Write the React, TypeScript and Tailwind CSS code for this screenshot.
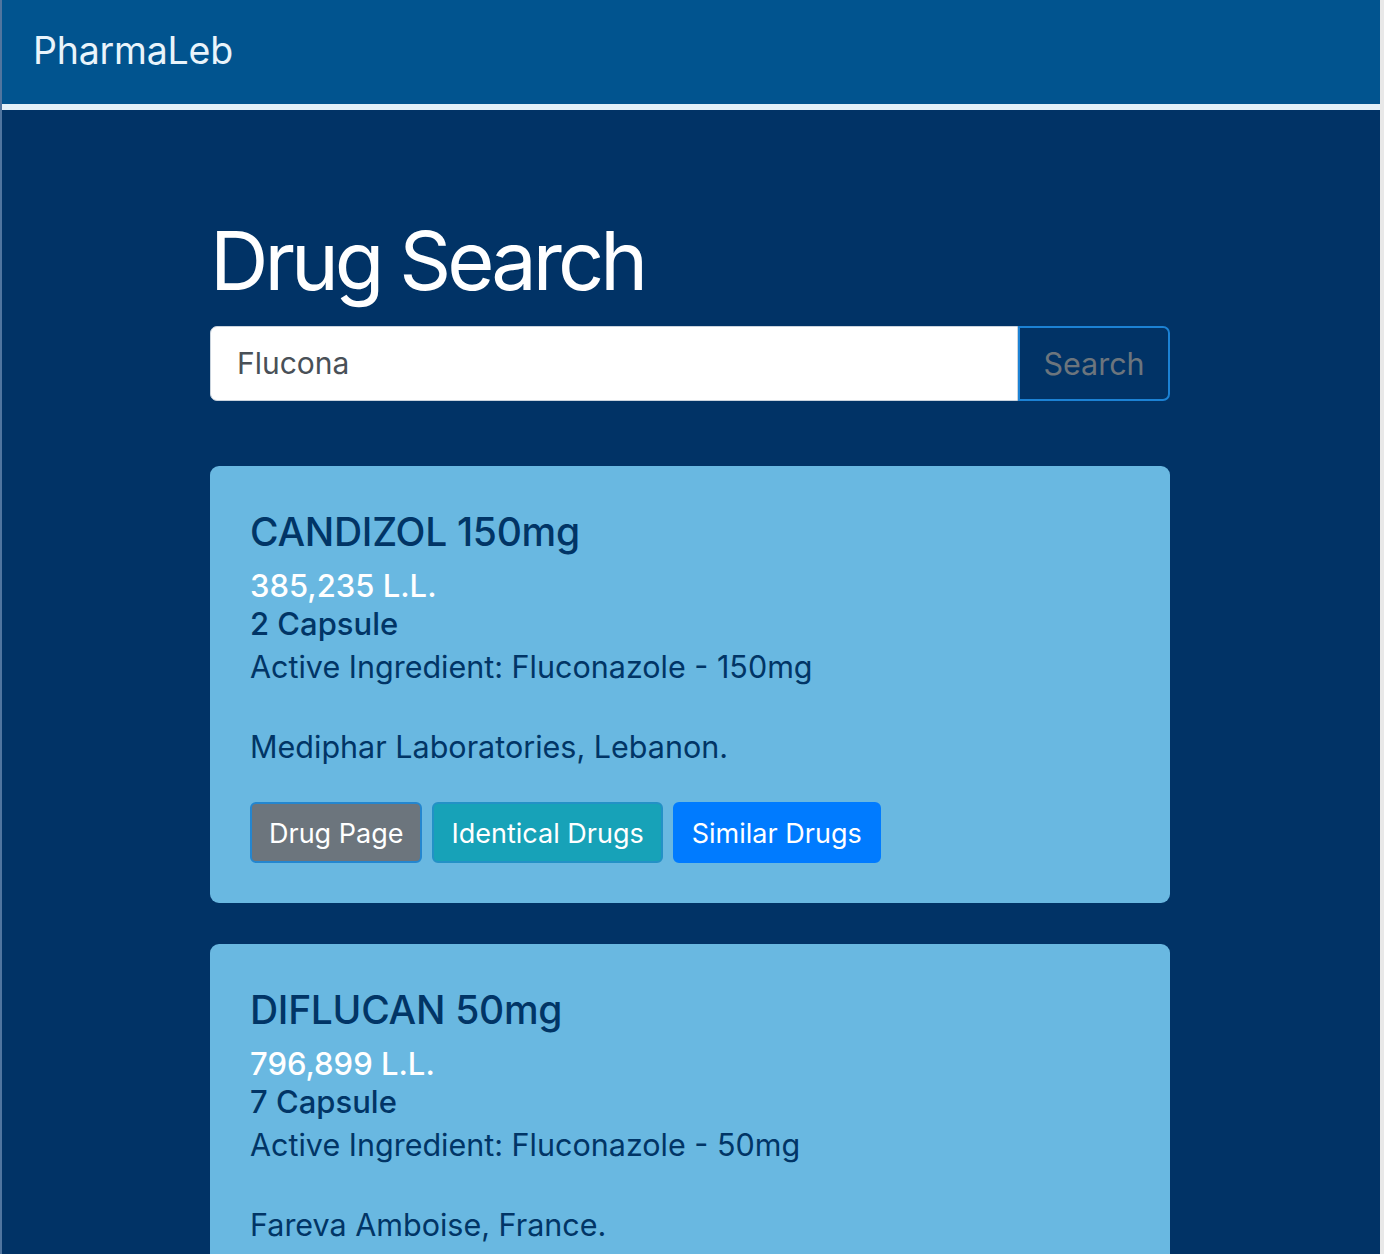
const drugs = [
  {
    name: "CANDIZOL 150mg",
    price: "385,235 L.L.",
    pack: "2 Capsule",
    ingredient: "Active Ingredient: Fluconazole - 150mg",
    maker: "Mediphar Laboratories, Lebanon.",
  },
  {
    name: "DIFLUCAN 50mg",
    price: "796,899 L.L.",
    pack: "7 Capsule",
    ingredient: "Active Ingredient: Fluconazole - 50mg",
    maker: "Fareva Amboise, France.",
  },
];

type Drug = (typeof drugs)[number];

function DrugCard({ drug }: { drug: Drug }) {
  return (
    <div className="bg-[#69b8e1] rounded-[9px] px-[40px] pt-[42px] pb-[40px] text-[#013566]">
      <h4 className="text-[39px] leading-[47px] font-medium tracking-[-0.3px] mb-[12px]">{drug.name}</h4>
      <p className="text-[31px] leading-[38px] font-medium text-white">{drug.price}</p>
      <p className="text-[31px] leading-[38px] font-medium">{drug.pack}</p>
      <p className="text-[30.5px] leading-[42px] mt-[3px]">{drug.ingredient}</p>
      <p className="text-[30.5px] leading-[42px] mt-[38px]">{drug.maker}</p>
      <div className="flex gap-[10px] mt-[34px]">
        <button className="h-[61px] px-[17px] pt-[3px] rounded-[6px] bg-[#6c757d] border-2 border-[#2486cf] text-white text-[27px]">
          Drug Page
        </button>
        <button className="h-[61px] px-[17px] pt-[3px] rounded-[6px] bg-[#17a2b8] border-2 border-[#2391c6] text-white text-[27px]">
          Identical Drugs
        </button>
        <button className="h-[61px] px-[17px] pt-[3px] rounded-[6px] bg-[#007bff] border-2 border-[#007bff] text-white text-[27px]">
          Similar Drugs
        </button>
      </div>
    </div>
  );
}

export default function App() {
  return (
    <div
      className="min-h-[1254px] bg-[#013366] border-l-2 border-l-[#50759f] border-r-4 border-r-[#e8e8e8] overflow-hidden"
      style={{ fontFamily: "Inter, 'Liberation Sans', sans-serif" }}
    >
      <header className="h-[104px] bg-[#01548f] flex items-center px-[31px] pb-[2px]">
        <span className="text-[37.5px] text-[#e9f4fb] tracking-[-0.2px]">PharmaLeb</span>
      </header>
      <div className="h-[6px] bg-[#e3f1f9]" />
      <main className="w-[960px] ml-[208px] pt-[103px]">
        <h1 className="text-[81px] leading-[1.2] text-white font-normal tracking-[-4px] mb-[16px]">
          Drug Search
        </h1>
        <div className="flex h-[75px]">
          <input
            className="flex-1 bg-white rounded-l-[7px] border border-[#c9d3dd] px-[26px] text-[30px] text-[#495057] outline-none"
            defaultValue="Flucona"
          />
          <button className="w-[152px] rounded-r-[7px] border-2 border-[#1c82d4] text-[30.5px] text-[#6c757d]">
            Search
          </button>
        </div>
        <div className="flex flex-col gap-[41px] mt-[65px]">
          {drugs.map((drug) => (
            <DrugCard key={drug.name} drug={drug} />
          ))}
        </div>
      </main>
    </div>
  );
}
